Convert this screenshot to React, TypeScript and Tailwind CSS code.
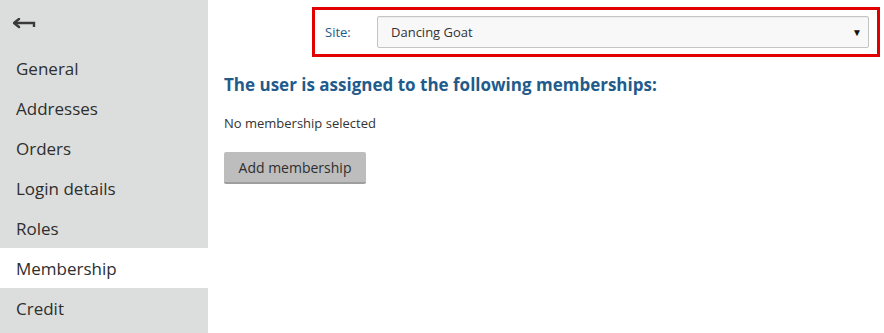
import React from 'react';

const items = ['General', 'Addresses', 'Orders', 'Login details', 'Roles', 'Membership', 'Credit'];

export default function App() {
  const active = 'Membership';
  return (
    <div className="flex w-[884px] h-[333px] overflow-hidden bg-white font-['Open_Sans',sans-serif] text-[#333]">
      {/* Sidebar */}
      <div className="w-[208px] shrink-0 bg-[#dcdedd] flex flex-col">
        <div className="h-[48px] flex items-center pl-[13px]">
          <svg width="24" height="12" viewBox="0 0 24 12" className="mt-[-1px]">
            <path d="M2 5 H21 V9" fill="none" stroke="#3a3a3a" strokeWidth="2.4" />
            <path d="M1 5 L6 1 M1 5 L6 9" fill="none" stroke="#3a3a3a" strokeWidth="2.4" strokeLinecap="round" />
          </svg>
        </div>
        {items.map((it) => (
          <div
            key={it}
            className={`h-[40px] flex items-center pl-[16px] pt-[2px] text-[17px] text-[#2e2e2e] ${
              it === active ? 'bg-white' : ''
            }`}
          >
            {it}
          </div>
        ))}
      </div>

      {/* Main */}
      <div className="flex-1 flex flex-col pl-[16px]">
        <div className="flex justify-end pt-[7px] pr-[4px]">
          <div className="w-[568px] h-[50px] border-[3px] border-[#e00000] flex items-center pl-[10px] pr-[8px]">
            <span className="text-[13px] text-[#1e5a87] w-[52px] pt-[1px]">Site:</span>
            <div className="flex-1 h-[32px] border border-[#c4c4c4] rounded-[2px] bg-[#f8f8f8] flex items-center justify-between pl-[13px] pr-[6px] pt-[1px] shadow-[inset_0_1px_1px_rgba(0,0,0,0.05)]">
              <span className="text-[13px] text-[#333]">Dancing Goat</span>
              <span className="text-[10px] text-[#111]">▼</span>
            </div>
          </div>
        </div>
        <h2 className="mt-[16px] text-[17px] font-bold text-[#1f5b8b] leading-[24px]">
          The user is assigned to the following memberships:
        </h2>
        <p className="mt-[17px] text-[13px] text-[#333] leading-[18px]">No membership selected</p>
        <div className="mt-[20px]">
          <button className="h-[32px] w-[142px] rounded-[2px] bg-[#bdbdbd] border-b-[2px] border-[#9e9e9e] text-[14px] font-medium text-[#2e2e2e]">
            Add membership
          </button>
        </div>
      </div>
    </div>
  );
}
